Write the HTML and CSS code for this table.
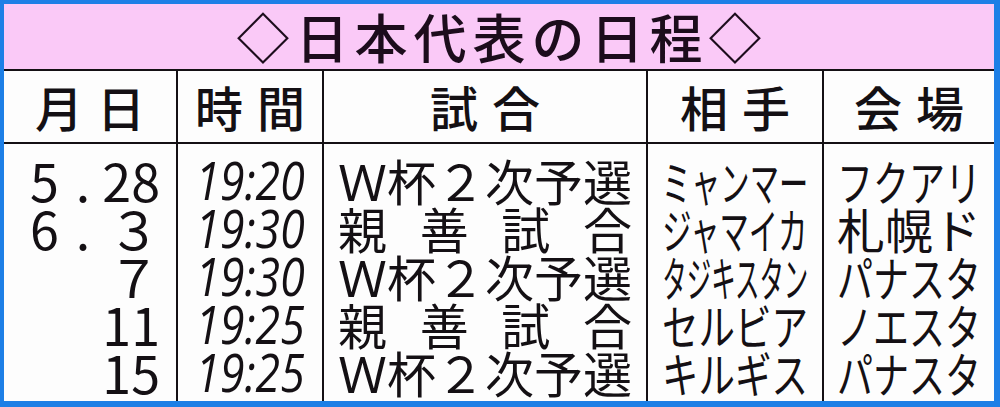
FILE: index.html
```html
<!DOCTYPE html>
<html lang="ja">
<head>
<meta charset="utf-8">
<title>日本代表の日程</title>
<link rel="stylesheet" href="styles.css">
</head>
<body>
<div class="frame">
  <div class="sheet">
    <h1 class="title">◇日本代表の日程◇</h1>
    <div class="table">
      <div class="th">月日</div>
      <div class="th">時間</div>
      <div class="th">試合</div>
      <div class="th">相手</div>
      <div class="th">会場</div>

      <div class="col date">
        <div class="line"><span class="m">5</span><span class="dot">.</span><span class="d">28</span></div>
        <div class="line"><span class="m">6</span><span class="dot">.</span><span class="d">３</span></div>
        <div class="line"><span class="m"></span><span class="dot"></span><span class="d">７</span></div>
        <div class="line"><span class="m"></span><span class="dot"></span><span class="d">11</span></div>
        <div class="line"><span class="m"></span><span class="dot"></span><span class="d">15</span></div>
      </div>
      <div class="col time">
        <div class="line"><span class="t">19:20</span></div>
        <div class="line"><span class="t">19:30</span></div>
        <div class="line"><span class="t">19:30</span></div>
        <div class="line"><span class="t">19:25</span></div>
        <div class="line"><span class="t">19:25</span></div>
      </div>
      <div class="col match">
        <div class="line">Ｗ杯２次予選</div>
        <div class="line">親善試合</div>
        <div class="line">Ｗ杯２次予選</div>
        <div class="line">親善試合</div>
        <div class="line">Ｗ杯２次予選</div>
      </div>
      <div class="col opp">
        <div class="line"><span class="fit n5">ミャンマー</span></div>
        <div class="line"><span class="fit n5">ジャマイカ</span></div>
        <div class="line"><span class="fit n6">タジキスタン</span></div>
        <div class="line"><span class="fit n4">セルビア</span></div>
        <div class="line"><span class="fit n4">キルギス</span></div>
      </div>
      <div class="col venue">
        <div class="line"><span class="fit n4">フクアリ</span></div>
        <div class="line"><span class="fit n3">札幌ド</span></div>
        <div class="line"><span class="fit n4">パナスタ</span></div>
        <div class="line"><span class="fit n4">ノエスタ</span></div>
        <div class="line"><span class="fit n4">パナスタ</span></div>
      </div>
    </div>
  </div>
</div>
</body>
</html>
```

FILE: styles.css
```css
html, body {
  margin: 0;
  padding: 0;
}
body {
  width: 1000px;
  height: 407px;
  overflow: hidden;
  font-family: "Noto Sans CJK JP", "Noto Sans", sans-serif;
  color: #141014;
}
.frame {
  width: 1000px;
  height: 407px;
  box-sizing: border-box;
  padding: 4px 6px 6px 4px;
  background: #1d7fe6;
}
.sheet {
  width: 990px;
  height: 397px;
  display: flex;
  flex-direction: column;
  background: #fdfdfd;
}
.title {
  margin: 0;
  height: 65px;
  line-height: 65px;
  background: #fac9f7;
  text-align: center;
  font-size: 53px;
  font-weight: 500;
  letter-spacing: 6px;
  padding-left: 6px;
  color: #1c0c1c;
}
.table {
  display: grid;
  grid-template-columns: 172px 144px 322px 174px 170px;
  grid-template-rows: 71px 257px;
  gap: 2px;
  background: #141014;
  border-top: 2px solid #141014;
}
.th {
  background: #fdfdfd;
  text-align: center;
  font-size: 48px;
  font-weight: 500;
  line-height: 71px;
  letter-spacing: 14px;
  padding-left: 14px;
}
.col {
  background: #fdfdfd;
  padding-top: 12px;
  min-width: 0;
}
.line {
  height: 48px;
  line-height: 48px;
  white-space: nowrap;
}
.date .line {
  display: grid;
  grid-template-columns: 40px 26px 1fr;
  padding: 0 16px 0 26px;
  font-size: 52px;
  font-weight: 400;
}
.date .dot {
  text-align: center;
}
.date .d {
  text-align: right;
}
.time .line {
  display: flex;
  justify-content: center;
}
.time .t {
  flex: none;
  font-family: "Open Sans", "Liberation Sans", sans-serif;
  font-style: italic;
  font-weight: 500;
  font-size: 53px;
  transform: scaleX(0.84);
}
.match .line {
  font-size: 49px;
  padding: 0 14px;
  text-align: justify;
  text-align-last: justify;
}
.opp .line,
.venue .line {
  display: flex;
  justify-content: center;
  font-size: 48px;
}
.fit {
  flex: none;
  transform-origin: center center;
}
.opp .n4 { transform: scaleX(0.76); }
.opp .n5 { transform: scaleX(0.61); }
.opp .n6 { transform: scaleX(0.51); }
.venue .n3 { transform: scaleX(1); }
.venue .n4 { transform: scaleX(0.75); }
```
